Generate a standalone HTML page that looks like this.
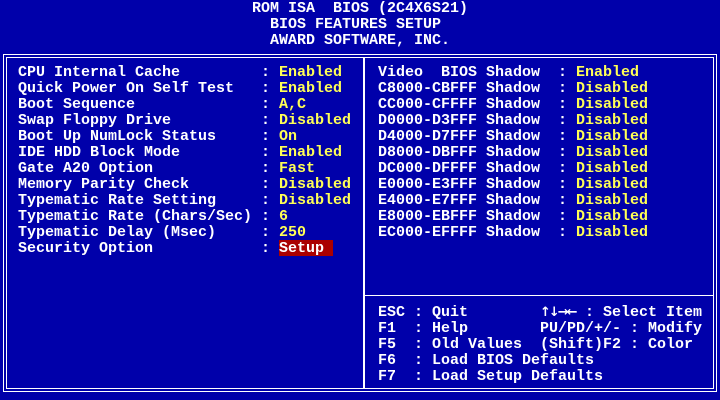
<!DOCTYPE html>
<html><head><meta charset="utf-8"><style>
html,body{margin:0;padding:0;}
body{width:720px;height:400px;background:#0000AA;position:relative;overflow:hidden;
font-family:"Liberation Mono","DejaVu Sans Mono",monospace;font-size:15px;font-weight:bold;color:#fff;}
.t{position:absolute;height:16px;line-height:16px;white-space:pre;margin-top:1px;}
.y{color:#FFFF55;}
.l{position:absolute;background:#fff;}
.hl{background:#AA0000;display:inline-block;height:16px;margin-top:-1px;padding-top:1px;vertical-align:top;height:15px;}
</style></head><body>
<div class="t" style="left:252px;top:0">ROM ISA  BIOS (2C4X6S21)</div>
<div class="t" style="left:270px;top:16px">BIOS FEATURES SETUP</div>
<div class="t" style="left:270px;top:32px">AWARD SOFTWARE, INC.</div>

<div class="l" style="left:3px;top:54px;width:714px;height:1px"></div>
<div class="l" style="left:6px;top:57px;width:708px;height:1px"></div>
<div class="l" style="left:3px;top:391px;width:714px;height:1px"></div>
<div class="l" style="left:6px;top:388px;width:708px;height:1px"></div>
<div class="l" style="left:3px;top:54px;width:1px;height:338px"></div>
<div class="l" style="left:6px;top:57px;width:1px;height:332px"></div>
<div class="l" style="left:716px;top:54px;width:1px;height:338px"></div>
<div class="l" style="left:713px;top:57px;width:1px;height:332px"></div>
<div class="l" style="left:363px;top:57px;width:2px;height:332px"></div>
<div class="l" style="left:364px;top:295px;width:350px;height:1px"></div>

<div class="t" style="left:18px;top:64px">CPU Internal Cache         : <span class="y">Enabled</span></div>
<div class="t" style="left:18px;top:80px">Quick Power On Self Test   : <span class="y">Enabled</span></div>
<div class="t" style="left:18px;top:96px">Boot Sequence              : <span class="y">A,C</span></div>
<div class="t" style="left:18px;top:112px">Swap Floppy Drive          : <span class="y">Disabled</span></div>
<div class="t" style="left:18px;top:128px">Boot Up NumLock Status     : <span class="y">On</span></div>
<div class="t" style="left:18px;top:144px">IDE HDD Block Mode         : <span class="y">Enabled</span></div>
<div class="t" style="left:18px;top:160px">Gate A20 Option            : <span class="y">Fast</span></div>
<div class="t" style="left:18px;top:176px">Memory Parity Check        : <span class="y">Disabled</span></div>
<div class="t" style="left:18px;top:192px">Typematic Rate Setting     : <span class="y">Disabled</span></div>
<div class="t" style="left:18px;top:208px">Typematic Rate (Chars/Sec) : <span class="y">6</span></div>
<div class="t" style="left:18px;top:224px">Typematic Delay (Msec)     : <span class="y">250</span></div>
<div class="t" style="left:18px;top:240px">Security Option            : </div>
<div style="position:absolute;left:279px;top:240px;width:54px;height:16px;background:#AA0000"></div>
<div class="t" style="left:279px;top:240px">Setup</div>

<div class="t" style="left:378px;top:64px">Video  BIOS Shadow  : <span class="y">Enabled</span></div>
<div class="t" style="left:378px;top:80px">C8000-CBFFF Shadow  : <span class="y">Disabled</span></div>
<div class="t" style="left:378px;top:96px">CC000-CFFFF Shadow  : <span class="y">Disabled</span></div>
<div class="t" style="left:378px;top:112px">D0000-D3FFF Shadow  : <span class="y">Disabled</span></div>
<div class="t" style="left:378px;top:128px">D4000-D7FFF Shadow  : <span class="y">Disabled</span></div>
<div class="t" style="left:378px;top:144px">D8000-DBFFF Shadow  : <span class="y">Disabled</span></div>
<div class="t" style="left:378px;top:160px">DC000-DFFFF Shadow  : <span class="y">Disabled</span></div>
<div class="t" style="left:378px;top:176px">E0000-E3FFF Shadow  : <span class="y">Disabled</span></div>
<div class="t" style="left:378px;top:192px">E4000-E7FFF Shadow  : <span class="y">Disabled</span></div>
<div class="t" style="left:378px;top:208px">E8000-EBFFF Shadow  : <span class="y">Disabled</span></div>
<div class="t" style="left:378px;top:224px">EC000-EFFFF Shadow  : <span class="y">Disabled</span></div>

<div class="t" style="left:378px;top:304px">ESC : Quit</div>
<div class="t" style="left:378px;top:320px">F1  : Help</div>
<div class="t" style="left:378px;top:336px">F5  : Old Values</div>
<div class="t" style="left:378px;top:352px">F6  : Load BIOS Defaults</div>
<div class="t" style="left:378px;top:368px">F7  : Load Setup Defaults</div>
<div class="t" style="left:540px;top:304px;font-family:'DejaVu Sans',sans-serif;font-size:13px;letter-spacing:-2px">↑↓→←</div>
<div class="t" style="left:576px;top:304px"> : Select Item</div>
<div class="t" style="left:540px;top:320px">PU/PD/+/- : Modify</div>
<div class="t" style="left:540px;top:336px">(Shift)F2 : Color</div>
</body></html>
